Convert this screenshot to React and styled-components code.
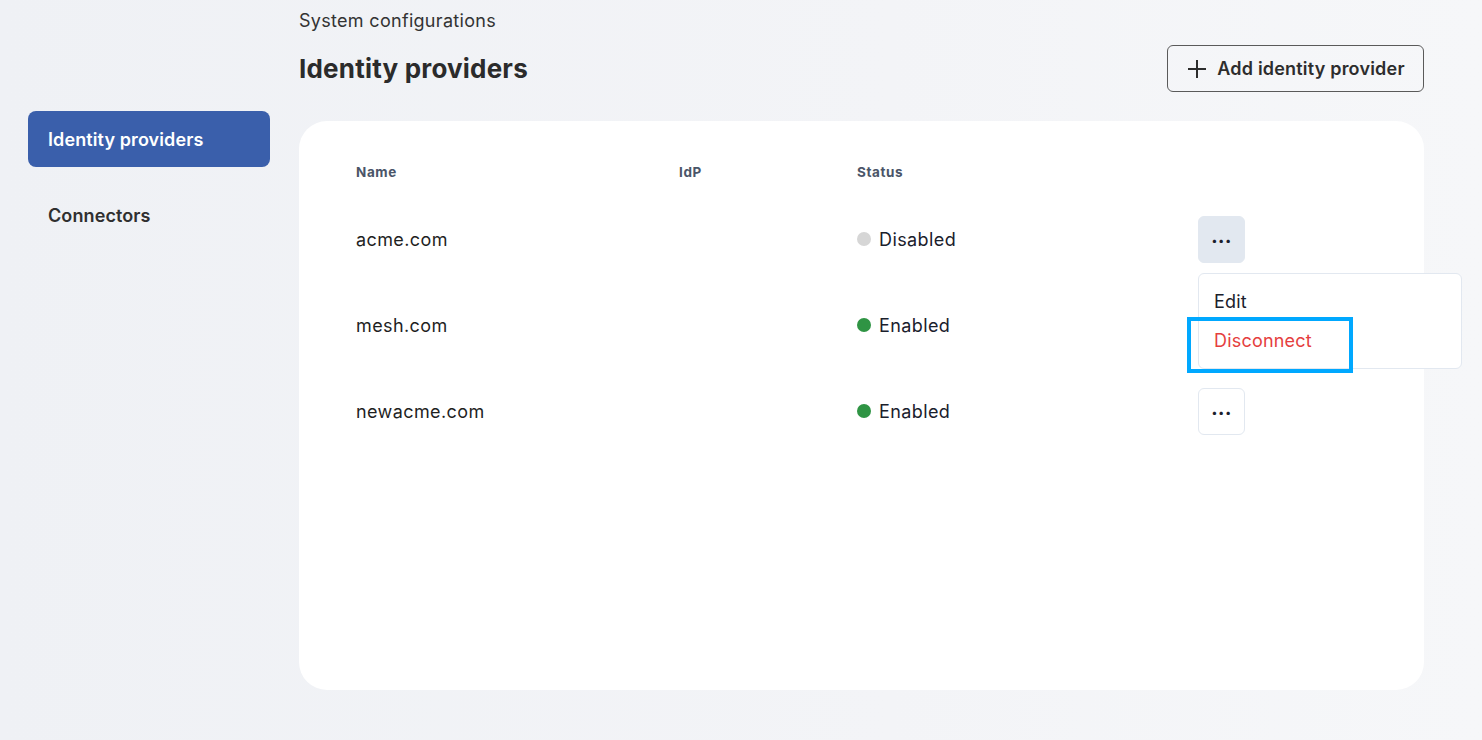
import styled, { createGlobalStyle } from "styled-components";

const GlobalStyle = createGlobalStyle`
  html, body {
    margin: 0;
    padding: 0;
  }
  body {
    font-family: Inter, "Noto Sans", "Liberation Sans", sans-serif;
    background: linear-gradient(90deg, #eff1f5 0%, #f3f4f7 60%, #f6f7f9 100%);
    color: #2d2d2d;
  }
`;

const providers = [
  { name: "acme.com", idp: "", enabled: false, menuOpen: true },
  { name: "mesh.com", idp: "", enabled: true },
  { name: "newacme.com", idp: "", enabled: true },
];

export default function App() {
  return (
    <>
      <GlobalStyle />
      <Page>
        <Sidebar>
          <NavItem $active>Identity providers</NavItem>
          <NavItem>Connectors</NavItem>
        </Sidebar>
        <Main>
          <Breadcrumb>System configurations</Breadcrumb>
          <HeaderRow>
            <Title>Identity providers</Title>
            <AddButton>
              <svg width="22" height="22" viewBox="0 0 22 22">
                <path d="M11 2v18M2 11h18" stroke="#2d2d2d" strokeWidth="2" />
              </svg>
              Add identity provider
            </AddButton>
          </HeaderRow>
          <Card>
            <Table>
              <HeadRow>
                <HeadCell>Name</HeadCell>
                <HeadCell>IdP</HeadCell>
                <HeadCell>Status</HeadCell>
                <HeadCell />
              </HeadRow>
              {providers.map((p) => (
                <Row key={p.name}>
                  <NameCell>{p.name}</NameCell>
                  <Cell>{p.idp}</Cell>
                  <StatusCell>
                    <Dot $on={p.enabled} />
                    {p.enabled ? "Enabled" : "Disabled"}
                  </StatusCell>
                  <ActionCell>
                    {p.name !== "mesh.com" && (
                      <MoreButton $active={p.menuOpen}>...</MoreButton>
                    )}
                    {p.menuOpen && (
                      <Menu>
                        <MenuItem>Edit</MenuItem>
                        <MenuItem $danger>Disconnect</MenuItem>
                        <Highlight />
                      </Menu>
                    )}
                  </ActionCell>
                </Row>
              ))}
            </Table>
          </Card>
        </Main>
      </Page>
    </>
  );
}

const Page = styled.div`
  display: flex;
  min-height: 740px;
`;

const Sidebar = styled.nav`
  width: 242px;
  padding: 111px 0 0 28px;
  display: flex;
  flex-direction: column;
  gap: 20px;
`;

const NavItem = styled.div`
  height: 56px;
  display: flex;
  align-items: center;
  padding-left: 20px;
  border-radius: 8px;
  font-size: 18px;
  font-weight: 600;
  letter-spacing: 0.1px;
  background: ${({ $active }) => ($active ? "#3a5fab" : "transparent")};
  color: ${({ $active }) => ($active ? "#ffffff" : "#2f2f2f")};
`;

const Main = styled.main`
  margin-left: 29px;
  width: 1125px;
  padding-top: 10px;
  display: flex;
  flex-direction: column;
`;

const Breadcrumb = styled.div`
  font-size: 18px;
  line-height: 22px;
  letter-spacing: 0.3px;
  color: #333;
`;

const HeaderRow = styled.div`
  margin-top: 13px;
  display: flex;
  align-items: center;
  justify-content: space-between;
`;

const Title = styled.h1`
  margin: 0;
  font-size: 26px;
  font-weight: 700;
  color: #2b2b2b;
  letter-spacing: 0.2px;
`;

const AddButton = styled.button`
  height: 47px;
  width: 257px;
  display: flex;
  align-items: center;
  justify-content: center;
  gap: 9px;
  border: 1px solid #5a5a5a;
  border-radius: 6px;
  background: transparent;
  font-family: inherit;
  font-size: 18px;
  font-weight: 600;
  letter-spacing: 0.2px;
  color: #2d2d2d;
`;

const Card = styled.section`
  margin-top: 29px;
  height: 569px;
  background: #ffffff;
  border-radius: 28px;
  padding: 43px 0 0 57px;
  box-sizing: border-box;
`;

const Table = styled.div`
  display: flex;
  flex-direction: column;
`;

const columns = `323px 178px 341px 1fr`;

const HeadRow = styled.div`
  display: grid;
  grid-template-columns: ${columns};
  height: 16px;
  margin-bottom: 16px;
`;

const HeadCell = styled.div`
  font-size: 13.5px;
  line-height: 16px;
  font-weight: 700;
  color: #4a5568;
  letter-spacing: 0.6px;
`;

const Row = styled.div`
  display: grid;
  grid-template-columns: ${columns};
  height: 86px;
  align-items: center;
`;

const Cell = styled.div`
  font-size: 18px;
  letter-spacing: 0.4px;
`;

const NameCell = styled(Cell)`
  color: #1f1f1f;
`;

const StatusCell = styled(Cell)`
  display: flex;
  align-items: center;
  gap: 8px;
  color: #1a202c;
`;

const Dot = styled.span`
  width: 14px;
  height: 14px;
  border-radius: 50%;
  background: ${({ $on }) => ($on ? "#2f9444" : "#d6d6d6")};
`;

const ActionCell = styled.div`
  position: relative;
  height: 47px;
`;

const MoreButton = styled.button`
  width: 47px;
  height: 47px;
  border-radius: 6px;
  border: 1px solid #e2e8f0;
  background: ${({ $active }) => ($active ? "#e2e8f0" : "#ffffff")};
  font-family: inherit;
  font-size: 18px;
  font-weight: 800;
  letter-spacing: 0.5px;
  color: #1a202c;
  padding: 0 0 6px;
`;

const Menu = styled.div`
  position: absolute;
  top: 57px;
  left: 0;
  width: 264px;
  height: 96px;
  box-sizing: border-box;
  padding: 8px 0;
  background: #ffffff;
  border: 1px solid #e2e8f0;
  border-radius: 6px;
  z-index: 2;
`;

const MenuItem = styled.div`
  height: 39px;
  display: flex;
  align-items: center;
  padding-left: 15px;
  font-size: 18px;
  letter-spacing: 0.2px;
  color: ${({ $danger }) => ($danger ? "#e53e3e" : "#1a202c")};
`;

const Highlight = styled.div`
  position: absolute;
  left: -12px;
  top: 43px;
  width: 166px;
  height: 56px;
  box-sizing: border-box;
  border: 4px solid #00a8ff;
`;
